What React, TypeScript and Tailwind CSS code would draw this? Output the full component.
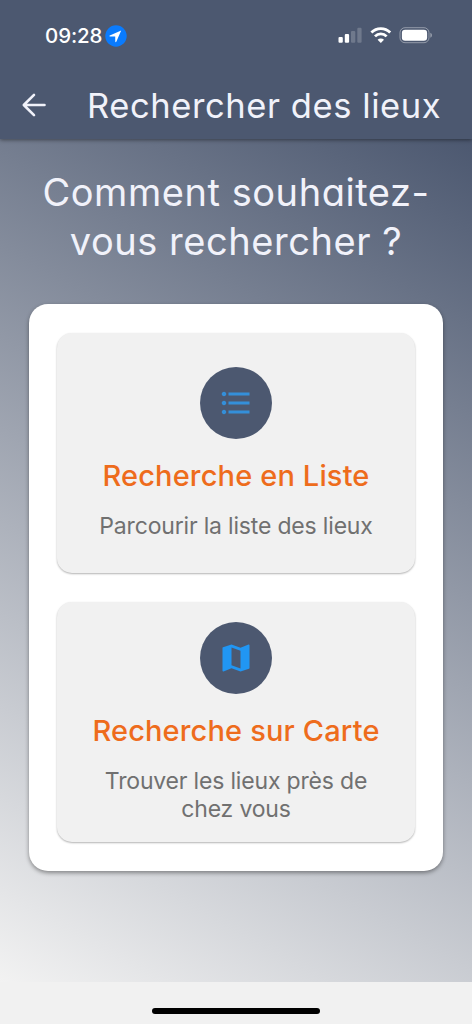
import type { ReactNode } from "react";
import { MdFormatListBulleted, MdMap } from "react-icons/md";

function StatusBar() {
  return (
    <div className="flex h-[71px] items-center justify-between pl-[45px] pr-[39px]">
      <div className="flex items-center gap-[2px]">
        <span className="w-[58px] whitespace-nowrap text-[20.5px] font-medium leading-6 tracking-[-0.1px] text-white">09:28</span>
        <svg width="22" height="22" viewBox="0 0 22 22">
          <circle cx="11" cy="11" r="10.7" fill="#0a7bfd" />
          <path d="M16.2 5.4 4.8 10.5c-.6.3-.5.9.1.9l5.3.1.1 5.1c0 .7.7.8 1 .2z" fill="#fff" />
        </svg>
      </div>
      <div className="flex items-center">
        <svg width="25" height="18" viewBox="0 0 25 18" fill="#fff">
          <rect x="0.5" y="10" width="4.3" height="5.8" rx="1.1" />
          <rect x="6.8" y="7" width="4.3" height="8.8" rx="1.1" />
          <rect x="13" y="4" width="4.3" height="11.8" rx="1.1" opacity=".2" />
          <rect x="19.3" y="0.8" width="4.3" height="15" rx="1.1" opacity=".2" />
        </svg>
        <svg className="ml-[7px]" width="22" height="18" viewBox="0 0 22 18" fill="none" stroke="#fff" strokeWidth="2.8">
          <path d="M1.4 5.5a13.2 13.2 0 0 1 18.8 0" />
          <path d="M5 9.4a8 8 0 0 1 11.6 0" />
          <path d="m10.8 16 3.2-3.2a4.5 4.5 0 0 0-6.4 0z" fill="#fff" stroke="none" />
        </svg>
        <svg className="ml-[7px]" width="34" height="18" viewBox="0 0 34 18">
          <rect x="1" y="0.7" width="29" height="15" rx="5" fill="none" stroke="#fff" strokeOpacity=".4" />
          <rect x="2.9" y="2.7" width="25.2" height="11" rx="3.2" fill="#fff" />
          <path d="M31.4 5.7c2 .7 2 4.3 0 5z" fill="#fff" opacity=".45" />
        </svg>
      </div>
    </div>
  );
}

function BackArrow() {
  return (
    <svg className="shrink-0" width="30" height="30" viewBox="0 0 30 30" fill="none" stroke="currentColor" strokeWidth="2.6" strokeLinecap="round" strokeLinejoin="round">
      <path d="M25.5 15H5M15 4.8 4.8 15 15 25.2" />
    </svg>
  );
}

function ChoiceCard({ icon, title, children }: { icon: ReactNode; title: string; children: ReactNode }) {
  return (
    <button className="flex h-[240px] w-full flex-col items-center justify-center rounded-[15px] bg-[#f1f1f1] shadow-[0_1px_2px_rgba(0,0,0,0.3)]">
      <span className="flex size-[72px] items-center justify-center rounded-full bg-[#4c5870]">{icon}</span>
      <span className="mt-[18px] whitespace-nowrap text-[29px] font-[450] leading-[38px] tracking-[0.15px] text-[#ee6c1c]">{title}</span>
      <span className="mt-[17px] text-[23px] font-[370] leading-[28px] tracking-[-0.18px] text-[#707070]">{children}</span>
    </button>
  );
}

export default function App() {
  return (
    <div className="flex h-[1024px] w-[472px] flex-col overflow-hidden bg-[#f1f1f1] font-['Inter',sans-serif]">
      <header className="relative h-[139px] bg-[#4c5870] shadow-[0_1px_4px_rgba(0,0,0,0.45)]">
        <StatusBar />
        <div className="flex h-[68px] items-center pl-[19px] text-[#f1f2fa]">
          <BackArrow />
          <h1 className="ml-[38px] whitespace-nowrap pt-px text-[34.5px] leading-[44px] tracking-[0.58px] [font-feature-settings:'cv11']">
            Rechercher des lieux
          </h1>
        </div>
      </header>
      <main className="flex h-[843px] flex-col bg-[linear-gradient(209.24deg,#4c5870,#f2f2f2)] px-[29px] pt-[29px]">
        <h2 className="text-center text-[38px] leading-[49px] tracking-[0.55px] text-[#f1f2fa] [font-feature-settings:'cv11']">
          <span className="block whitespace-nowrap">Comment souhaitez-</span>
          <span className="block whitespace-nowrap">vous rechercher ?</span>
        </h2>
        <section className="mt-[38px] flex h-[567px] flex-col gap-[29px] rounded-[19px] bg-white px-[28px] pt-[29px] shadow-[0_2px_4px_rgba(0,0,0,0.4)]">
          <ChoiceCard icon={<MdFormatListBulleted className="size-[36px] text-[#348fd9]" />} title="Recherche en Liste">
            <span className="block whitespace-nowrap">Parcourir la liste des lieux</span>
          </ChoiceCard>
          <ChoiceCard icon={<MdMap className="size-[36px] text-[#2196f3]" />} title="Recherche sur Carte">
            <span className="block whitespace-nowrap">Trouver les lieux près de</span>
            <span className="block whitespace-nowrap">chez vous</span>
          </ChoiceCard>
        </section>
      </main>
      <footer className="flex flex-1 items-start justify-center pt-[26px]">
        <div className="h-[6px] w-[168px] rounded-full bg-black" />
      </footer>
    </div>
  );
}
